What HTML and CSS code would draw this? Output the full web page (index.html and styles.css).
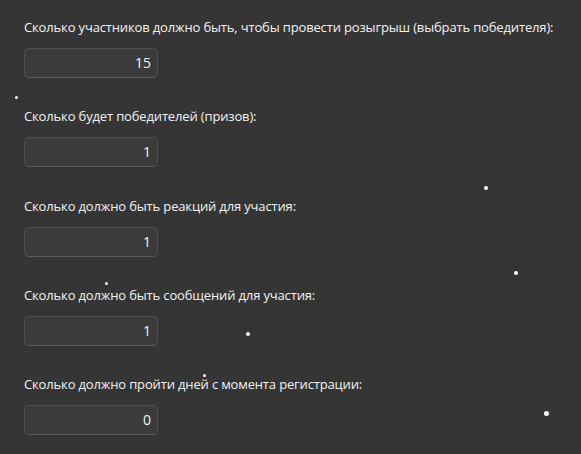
FILE: index.html
```html
<!DOCTYPE html>
<html lang="ru">
<head>
    <meta charset="UTF-8">
    <meta name="viewport" content="width=device-width, initial-scale=1.0">
    <title>Настройки розыгрыша</title>
    <link rel="stylesheet" href="styles.css">
</head>
<body>
    <div class="settings">
        <div class="field">
            <label for="members">Сколько участников должно быть, чтобы провести розыгрыш (выбрать победителя):</label>
            <input type="text" id="members" value="15">
        </div>
        <div class="field">
            <label for="winners">Сколько будет победителей (призов):</label>
            <input type="text" id="winners" value="1">
        </div>
        <div class="field">
            <label for="reactions">Сколько должно быть реакций для участия:</label>
            <input type="text" id="reactions" value="1">
        </div>
        <div class="field">
            <label for="messages">Сколько должно быть сообщений для участия:</label>
            <input type="text" id="messages" value="1">
        </div>
        <div class="field">
            <label for="days">Сколько должно пройти дней с момента регистрации:</label>
            <input type="text" id="days" value="0">
        </div>
    </div>

    <!-- снежинки -->
    <div class="snow">
        <span class="flake s3" style="left:15px; top:96px"></span>
        <span class="flake s4" style="left:484px; top:186px"></span>
        <span class="flake s4" style="left:514px; top:271px"></span>
        <span class="flake s3" style="left:105px; top:282px"></span>
        <span class="flake s4" style="left:246px; top:332px"></span>
        <span class="flake s3" style="left:203px; top:374px"></span>
        <span class="flake s5" style="left:544px; top:411px"></span>
    </div>
</body>
</html>
```

FILE: styles.css
```css
html, body {
    margin: 0;
    height: 100%;
}
body {
    background-color: #353535;
    color: #f2f2f2;
    font-family: "Open Sans", "Noto Sans", sans-serif;
    font-size: 13px;
    overflow: hidden;
    position: relative;
}
.settings {
    padding: 17px 24px 0;
}
.field {
    display: flex;
    flex-direction: column;
    align-items: flex-start;
    height: 89.25px;
}
.field label {
    line-height: 20px;
    white-space: nowrap;
    letter-spacing: -0.15px;
}
.field input {
    margin-top: 11px;
    width: 134px;
    height: 30px;
    box-sizing: border-box;
    padding: 0 6px 1px;
    background-color: #3b3b3b;
    border: 1px solid #4f4f4f;
    border-bottom-color: #5a5a5a;
    border-radius: 5px;
    color: #f2f2f2;
    font-family: inherit;
    font-size: 14px;
    text-align: right;
    outline: none;
}
.snow {
    position: absolute;
    inset: 0;
    pointer-events: none;
}
.flake {
    position: absolute;
    background: #ffffff;
    border-radius: 50%;
}
.s3 { width: 3px; height: 3px; }
.s4 { width: 4px; height: 4px; }
.s5 { width: 5px; height: 5px; }
```
